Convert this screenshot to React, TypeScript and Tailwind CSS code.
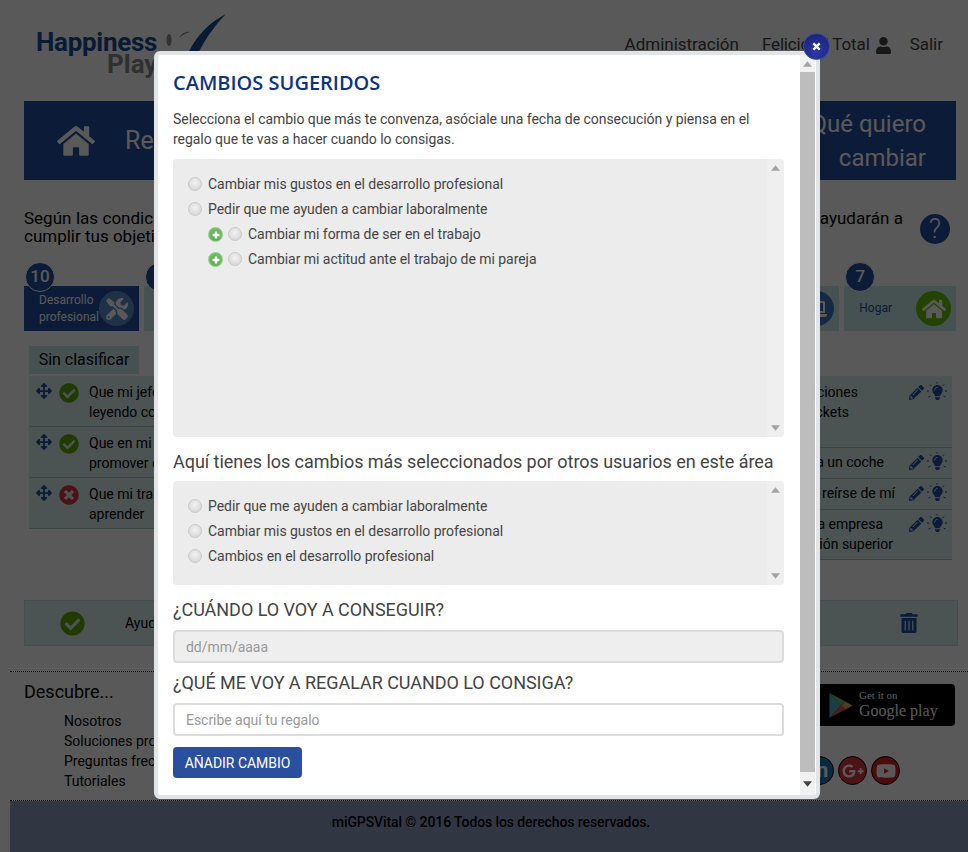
import type { ReactNode } from "react"
import {
  FaArrowsAlt,
  FaCheckCircle,
  FaGooglePlusG,
  FaHome,
  FaLightbulb,
  FaLaptop,
  FaPencilAlt,
  FaTimesCircle,
  FaTools,
  FaTrashAlt,
  FaUser,
  FaYoutube,
} from "react-icons/fa"

const roboto = "font-['Roboto','Liberation_Sans',sans-serif]"

function Radio({ className }: { className?: string }) {
  return (
    <span className={`block size-[14px] shrink-0 rounded-full border border-[#c9c9c9] bg-[radial-gradient(circle_at_50%_40%,#f2f2f2,#d0d0d0)] ${className ?? ""}`} />
  )
}

function GreenPlus() {
  return (
    <span className="mt-[2px] flex size-[15px] shrink-0 items-center justify-center rounded-full border border-[#8fcf88] bg-[radial-gradient(circle_at_50%_60%,#4fa544,#7ccb70)]">
      <svg viewBox="0 0 10 10" className="size-[10px]">
        <path d="M5 1.5v7M1.5 5h7" stroke="#fff" strokeWidth="2.4" />
      </svg>
    </span>
  )
}

function Arrow({ down }: { down?: boolean }) {
  return (
    <svg viewBox="0 0 10 6" className="h-[6px] w-[9px]">
      <path d={down ? "M0 0h10L5 6z" : "M0 6h10L5 0z"} fill="#a3a3a3" />
    </svg>
  )
}

function ListBox({ className, children }: { className: string; children: ReactNode }) {
  return (
    <div className={`flex overflow-hidden rounded bg-[#ececec] ${className}`}>
      <div className="flex-1 pl-[15px] pt-[12px] text-sm text-[#444]">{children}</div>
      <div className="flex w-[17px] flex-col items-center justify-between bg-[#efefef] py-[6px]">
        <Arrow />
        <Arrow down />
      </div>
    </div>
  )
}

function Option({ label, nested }: { label: string; nested?: boolean }) {
  return (
    <div className={`flex h-[25px] items-center ${nested ? "pl-[20px]" : ""}`}>
      {nested && <GreenPlus />}
      <Radio className={nested ? "ml-[5px]" : ""} />
      <span className="ml-[6px] leading-none">{label}</span>
    </div>
  )
}

function Modal() {
  return (
    <div className="absolute left-[154px] top-[51px] flex h-[748px] w-[666px] rounded-md border-4 border-[#e2e5e8] bg-white">
      <div className={`w-[642px] pl-[15px] tracking-[-0.04px] ${roboto}`}>
        <h2 className="mt-[14px] font-['Open_Sans',sans-serif] text-xl font-semibold leading-7 tracking-normal text-[#0d3484]">
          CAMBIOS SUGERIDOS
        </h2>
        <p className="mt-3 w-[600px] text-sm leading-5 text-[#444]">
          Selecciona el cambio que más te convenza, asóciale una fecha de consecución y piensa en el regalo que te vas a hacer cuando lo consigas.
        </p>
        <ListBox className="mt-[10px] h-[278px] w-[611px]">
          <Option label="Cambiar mis gustos en el desarrollo profesional" />
          <Option label="Pedir que me ayuden a cambiar laboralmente" />
          <Option nested label="Cambiar mi forma de ser en el trabajo" />
          <Option nested label="Cambiar mi actitud ante el trabajo de mi pareja" />
        </ListBox>
        <h3 className="mt-[13px] text-lg leading-6 text-[#444]">
          Aquí tienes los cambios más seleccionados por otros usuarios en este área
        </h3>
        <ListBox className="mt-[7px] h-[104px] w-[611px]">
          <Option label="Pedir que me ayuden a cambiar laboralmente" />
          <Option label="Cambiar mis gustos en el desarrollo profesional" />
          <Option label="Cambios en el desarrollo profesional" />
        </ListBox>
        <h3 className="mt-[13px] text-lg leading-6 text-[#444]">¿CUÁNDO LO VOY A CONSEGUIR?</h3>
        <div className="mt-2 flex h-[33px] w-[611px] items-center rounded border-2 border-[#dcdcdc] bg-[#eee] px-[11px] text-sm text-[#999]">
          dd/mm/aaaa
        </div>
        <h3 className="mt-2 text-lg leading-6 text-[#444]">¿QUÉ ME VOY A REGALAR CUANDO LO CONSIGA?</h3>
        <div className="mt-2 flex h-[33px] w-[611px] items-center rounded border-2 border-[#dcdcdc] bg-white px-[11px] text-sm text-[#999]">
          Escribe aquí tu regalo
        </div>
        <button className="mt-[11px] h-[31px] w-[129px] rounded bg-[#2a4f9f] text-sm text-white">
          AÑADIR CAMBIO
        </button>
      </div>
      <div className="flex w-[15px] flex-col items-center bg-[#f1f1f1]">
        <div className="flex h-[17px] items-center justify-center">
          <Arrow />
        </div>
        <div className="h-[700px] w-full bg-[#bdbdbd]" />
        <div className="flex flex-1 items-center justify-center">
          <svg viewBox="0 0 10 6" className="h-[6px] w-[9px]">
            <path d="M0 0h10L5 6z" fill="#444" />
          </svg>
        </div>
      </div>
      <button className="absolute left-[645px] top-[-22px] flex size-[27px] items-center justify-center rounded-full border border-[#3a4aa8] bg-[radial-gradient(circle_at_50%_70%,#2c3aa6,#14206f)] text-xs font-bold text-white">
        <svg viewBox="0 0 10 10" className="size-[9px]">
          <path d="M1.5 1.5l7 7M8.5 1.5l-7 7" stroke="#fff" strokeWidth="2.6" />
        </svg>
      </button>
    </div>
  )
}

function Logo() {
  return (
    <div className="relative h-[72px] w-[230px]">
      <span className="absolute left-[36px] top-[28px] font-['Roboto',sans-serif] text-[26px] font-bold leading-7 tracking-[-0.3px] text-[#1c4a94]">
        Happiness
      </span>
      <span className="absolute left-[107px] top-[50px] font-['Roboto',sans-serif] text-[26px] font-bold leading-7 text-[#8a8a8a]">
        Play
      </span>
      <svg viewBox="0 0 70 70" className="absolute left-[160px] top-[10px] h-[70px] w-[70px]">
        <path d="M66 4C46 14 30 32 22 60c-2-8-3-14-4-20 3 14 6 24 10 30C36 42 50 20 66 4z" fill="#1c4a94" />
        <ellipse cx="9" cy="30" rx="2.5" ry="6" fill="#8a8a8a" />
        <path d="M19 28c3-5 7-7 11-6-4 1-8 3-11 6z" fill="#8a8a8a" />
      </svg>
    </div>
  )
}

function Tab({ num, label, active, circle, children, className }: {
  num?: string
  label?: string
  active?: boolean
  circle: string
  children: ReactNode
  className: string
}) {
  return (
    <div className={`relative h-[45px] ${className} ${active ? "bg-[#234fa0]" : "bg-[#c9ecec]"}`}>
      <span className="absolute left-[1px] top-[-24px] flex size-[30px] items-center justify-center rounded-full border border-white bg-[#234fa0] text-[17px] font-medium text-white">
        {num}
      </span>
      <div className={`flex h-full items-center justify-between pl-[15px] pr-[5px] text-xs leading-[17px] ${active ? "text-white" : "text-[#234fa0]"}`}>
        <span>{label}</span>
        <span className={`flex size-[35px] shrink-0 items-center justify-center rounded-full text-white ${circle}`}>
          {children}
        </span>
      </div>
    </div>
  )
}

function RowIcons() {
  return (
    <span className="flex items-center gap-[3px] text-[#234fa0]">
      <FaPencilAlt className="size-[15px]" />
      <span className="relative flex size-[20px] items-center justify-center">
        <FaLightbulb className="size-[15px]" />
        <svg viewBox="0 0 20 20" className="absolute inset-0 size-[20px]">
          <path d="M10 0v1.5M3 2.5l1.5 1.5M17 2.5L15.5 4M0 9h2M18 9h2M1.5 15l2-1M18.5 15l-2-1" stroke="currentColor" strokeWidth="1" />
        </svg>
      </span>
    </span>
  )
}

const leftRows = [
  { ok: true, lines: ["Que mi jefe me reconozca el trabajo que hago", "leyendo correos"] },
  { ok: true, lines: ["Que en mi empresa haya más posibilidades de", "promover en mi carrera"] },
  { ok: false, lines: ["Que mi trabajo sea más interesante y pueda", "aprender"] },
]

const rightRows = [
  { h: "h-[72px] pt-[6px]", lines: [["Mejorar las condiciones", "pr-[51px]"], ["Conseguir tickets", "pr-[60px]"]] },
  { h: "h-[31px] pt-[4px]", lines: [["Que me den en la empresa un coche", "pr-[25px]"]] },
  { h: "h-[31px] pt-[4px]", lines: [["Que mis compañeros dejen de reírse de mí", "pr-[14px]"]] },
  { h: "h-[50px] pt-[4px]", lines: [["Que me cambien a otra empresa", "pr-[26px]"], ["con una posición superior", "pr-[16px]"]] },
]

export default function App() {
  return (
    <div className={`relative h-[852px] w-[968px] overflow-hidden bg-white text-black ${roboto}`}>
      <header className="flex h-[101px] justify-between">
        <Logo />
        <nav className="flex h-[90px] items-center pr-[25px] text-[17px] text-[#444]">
          <span>Administración</span>
          <span className="ml-[23px] tracking-[-0.14px]">Felicidad Total</span>
          <FaUser className="ml-[5px] size-[17px]" />
          <span className="ml-[18px]">Salir</span>
        </nav>
      </header>

      <div className="ml-6 mr-3 flex h-[79px] items-center justify-between bg-[#234fa0] pl-[33px] pr-[30px] text-white">
        <div className="flex items-center gap-[30px]">
          <FaHome className="size-[38px]" />
          <span className="text-[25px]">Resumen</span>
        </div>
        <div className="text-right text-2xl leading-[34px]">
          ¿Qué quiero
          <br />
          cambiar
        </div>
      </div>

      <div className="ml-6 mr-3 mt-[29px] flex h-[38px] justify-between">
        <div className="w-[879px] text-[17px] leading-[18px]">
          <p className="text-justify [text-align-last:justify]">
            Según las condiciones que has marcado en tu perfil, te proponemos estos cambios en tu vida real que te ayudarán a
          </p>
          <p>cumplir tus objetivos</p>
        </div>
        <span className="mr-[6px] mt-[5px] flex size-[30px] items-center justify-center rounded-full bg-[#234fa0] text-[27px] font-light leading-none text-white">
          ?
        </span>
      </div>

      <div className="ml-6 mr-3 mt-[39px] flex gap-[5px]">
        <Tab num="10" label="Desarrollo profesional" active circle="bg-[#5b8cc9]" className="w-[115px]">
          <FaTools className="size-[22px]" />
        </Tab>
        {["8", "8", "7", "7", "7", "7"].map((n, i) => (
          <Tab key={i} num={n} circle="bg-[#3b78c4]" className="flex-1">
            <FaLaptop className="size-[20px]" />
          </Tab>
        ))}
        <Tab num="7" label="Hogar" circle="bg-[#6cc000]" className="flex-1">
          <FaHome className="size-[24px]" />
        </Tab>
      </div>

      <div className="ml-[29px] mt-[15px] flex h-[28px] w-[110px] items-center justify-center bg-[#c9ecec] text-base">
        Sin clasificar
      </div>

      <div className="ml-[29px] mr-4 mt-[2px] flex h-[184px] items-start text-sm leading-5">
        <div className="w-[460px]">
          {leftRows.map((row, i) => (
            <div key={i} className="flex h-[51px] items-start border-b border-[#a9c4c4] bg-[#d7eeee] pl-[7px] pt-[6px]">
              <FaArrowsAlt className="mt-[1px] size-[16px] text-[#234fa0]" />
              {row.ok ? (
                <FaCheckCircle className="ml-[7px] mt-[1px] size-[20px] shrink-0 text-[#5ea600]" />
              ) : (
                <FaTimesCircle className="ml-[7px] mt-[1px] size-[20px] shrink-0 text-[#d9363e]" />
              )}
              <div className="ml-[10px]">
                {row.lines.map((line) => (
                  <div key={line}>{line}</div>
                ))}
              </div>
            </div>
          ))}
        </div>
        <div className="flex-1">
          {rightRows.map((row, i) => (
            <div key={i} className={`flex items-start justify-end border-b border-[#a9c4c4] bg-[#d7eeee] pr-[5px] ${row.h}`}>
              <div className="flex-1">
                {row.lines.map(([text, pad], j) => (
                  <div key={j} className={`text-right ${pad}`}>{text}</div>
                ))}
              </div>
              <RowIcons />
            </div>
          ))}
        </div>
      </div>

      <div className="ml-6 mt-[40px] flex h-[46px] w-[934px] items-center border border-[#c4dede] bg-[#d7eeee] pl-[35px] text-sm">
        <FaCheckCircle className="size-[25px] text-[#5ea600]" />
        <span className="ml-[40px]">Ayuda en el trabajo</span>
        <FaTrashAlt className="ml-auto mr-[38px] size-[20px] text-[#234fa0]" />
      </div>

      <footer className="ml-[10px] mt-[25px] flex h-[130px] justify-between border-y border-dotted border-black pl-[14px]">
        <div>
          <div className="mt-[8px] text-lg leading-6">Descubre...</div>
          <ul className="mt-[7px] pl-[40px] text-sm leading-5">
            <li>Nosotros</li>
            <li>Soluciones profesionales</li>
            <li>Preguntas frecuentes</li>
            <li>Tutoriales</li>
          </ul>
        </div>
        <div className="mr-[13px] flex w-[150px] flex-col items-end">
          <div className="mt-[12px] flex h-[42px] w-[150px] items-center gap-[6px] rounded bg-black pl-[24px] text-white">
            <svg viewBox="0 0 24 26" className="h-[25px] w-[24px] shrink-0">
              <path d="M0 0l12 13L0 26z" fill="#4fb3c4" />
              <path d="M0 0l17 9-5 4z" fill="#6cc07a" />
              <path d="M0 26l17-9-5-4z" fill="#d9534f" />
              <path d="M17 9l7 4-7 4-5-4z" fill="#f2b33d" />
            </svg>
            <div className="font-['Liberation_Serif',serif]">
              <div className="text-[11px] leading-[11px]">Get it on</div>
              <div className="whitespace-nowrap text-base leading-[19px]">Google play</div>
            </div>
          </div>
          <div className="mr-[55px] mt-[30px] flex gap-1">
            <span className="flex size-[29px] items-center justify-center rounded-full border border-black bg-[#1478b8] text-[21px] font-bold text-white">in</span>
            <span className="flex size-[29px] items-center justify-center rounded-full border border-black bg-[#d9363e] text-white">
              <FaGooglePlusG className="size-[22px]" />
            </span>
            <span className="flex size-[29px] items-center justify-center rounded-full border border-black bg-[#e02020] text-white">
              <FaYoutube className="size-[20px]" />
            </span>
          </div>
        </div>
      </footer>

      <div className="ml-[10px] flex h-[51px] justify-center bg-[#8e9cc0] pl-[4px] pt-[11px] text-sm font-medium tracking-[-0.1px]">
        miGPSVital © 2016 Todos los derechos reservados.
      </div>

      <div className="absolute inset-0 bg-black/65" />
      <Modal />
    </div>
  )
}
